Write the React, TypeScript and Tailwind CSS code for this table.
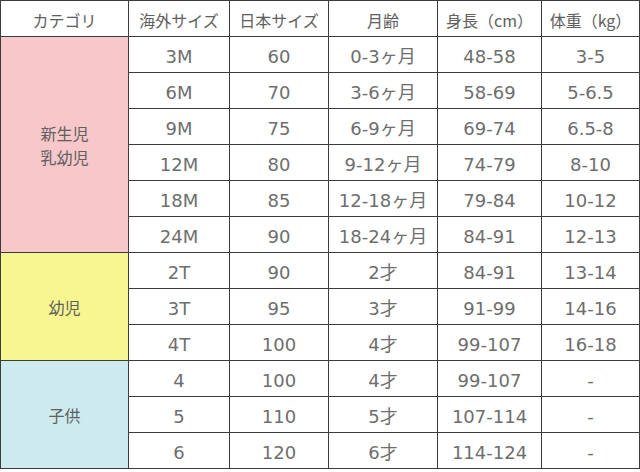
type Row = { intl: string; jp: string; age: string; height: string; weight: string };

const GROUPS: { label: string[]; bg: string; rows: Row[] }[] = [
  {
    label: ["新生児", "乳幼児"],
    bg: "bg-[#f7c7ca]",
    rows: [
      { intl: "3M", jp: "60", age: "0-3ヶ月", height: "48-58", weight: "3-5" },
      { intl: "6M", jp: "70", age: "3-6ヶ月", height: "58-69", weight: "5-6.5" },
      { intl: "9M", jp: "75", age: "6-9ヶ月", height: "69-74", weight: "6.5-8" },
      { intl: "12M", jp: "80", age: "9-12ヶ月", height: "74-79", weight: "8-10" },
      { intl: "18M", jp: "85", age: "12-18ヶ月", height: "79-84", weight: "10-12" },
      { intl: "24M", jp: "90", age: "18-24ヶ月", height: "84-91", weight: "12-13" },
    ],
  },
  {
    label: ["幼児"],
    bg: "bg-[#f8f690]",
    rows: [
      { intl: "2T", jp: "90", age: "2才", height: "84-91", weight: "13-14" },
      { intl: "3T", jp: "95", age: "3才", height: "91-99", weight: "14-16" },
      { intl: "4T", jp: "100", age: "4才", height: "99-107", weight: "16-18" },
    ],
  },
  {
    label: ["子供"],
    bg: "bg-[#cdeaee]",
    rows: [
      { intl: "4", jp: "100", age: "4才", height: "99-107", weight: "-" },
      { intl: "5", jp: "110", age: "5才", height: "107-114", weight: "-" },
      { intl: "6", jp: "120", age: "6才", height: "114-124", weight: "-" },
    ],
  },
];

const HEADERS = ["カテゴリ", "海外サイズ", "日本サイズ", "月齢", "身長（cm）", "体重（kg）"];

const cell = "border border-[#3c3c3c] text-center align-middle";
const data = `${cell} text-[18px] pt-[3px] text-[#6e6e6e] font-['DejaVu_Sans','Noto_Sans_CJK_JP',sans-serif] whitespace-nowrap`;

export default function App() {
  return (
    <div className="w-[640px] h-[472px] bg-white font-['Noto_Sans_CJK_JP','Noto_Sans',sans-serif] text-[#606060]">
      <table className="table-fixed border-collapse w-[639px]">
        <colgroup>
          <col className="w-[128px]" />
          <col className="w-[101px]" />
          <col className="w-[99px]" />
          <col className="w-[109px]" />
          <col className="w-[104px]" />
          <col className="w-[98px]" />
        </colgroup>
        <thead>
          <tr className="h-[36px]">
            {HEADERS.map((h) => (
              <th key={h} className={`${cell} font-normal text-[16px] pt-[2px] whitespace-nowrap`}>
                {h}
              </th>
            ))}
          </tr>
        </thead>
        <tbody>
          {GROUPS.map((g) =>
            g.rows.map((r, i) => (
              <tr key={g.label[0] + r.intl} className="h-[36px]">
                {i === 0 && (
                  <td rowSpan={g.rows.length} className={`${cell} ${g.bg} text-[16px] leading-[24px]`}>
                    {g.label.map((l) => (
                      <div key={l}>{l}</div>
                    ))}
                  </td>
                )}
                <td className={data}>{r.intl}</td>
                <td className={data}>{r.jp}</td>
                <td className={data}>{r.age}</td>
                <td className={data}>{r.height}</td>
                <td className={data}>{r.weight}</td>
              </tr>
            ))
          )}
        </tbody>
      </table>
    </div>
  );
}
